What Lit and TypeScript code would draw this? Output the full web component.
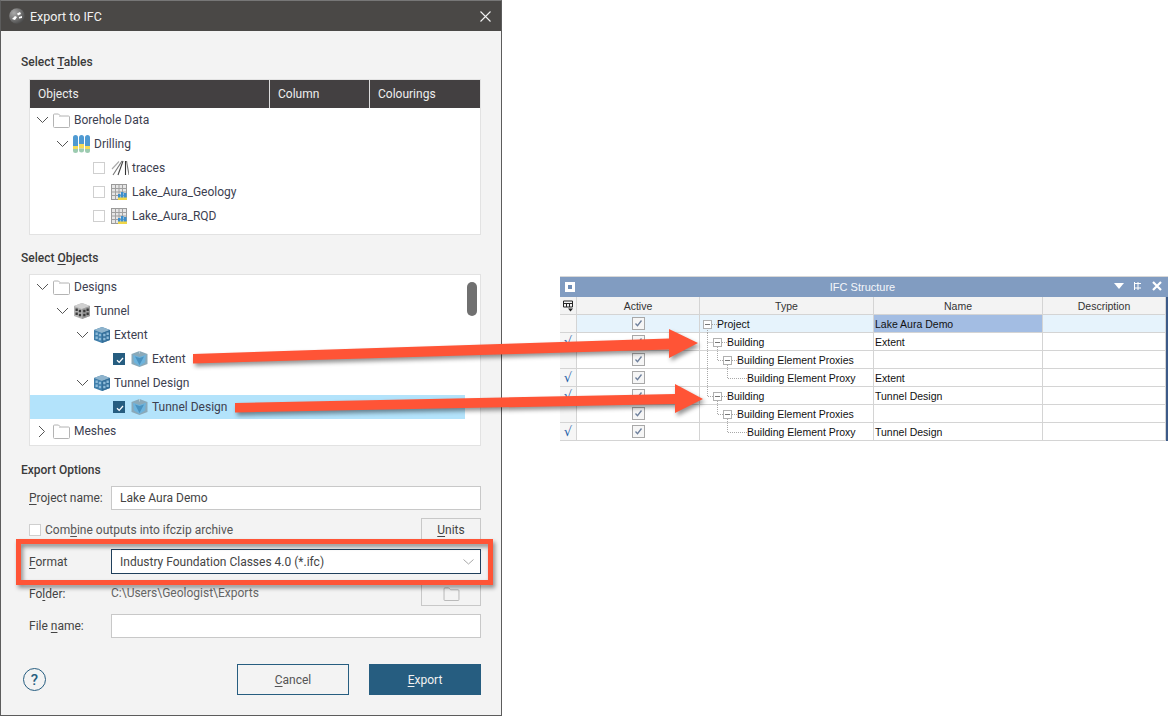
import { LitElement, html, css, svg } from "lit";
import { customElement } from "lit/decorators.js";

const chevDown = html`<svg class="chev" viewBox="0 0 13 8" width="13" height="8"><path d="M1 1l5.500 5.500L12 1" fill="none" stroke="#555" stroke-width="1"/></svg>`;
const chevRight = html`<svg class="chevr" viewBox="0 0 8 13" width="8" height="13"><path d="M1 1l5.500 5.500L1 12" fill="none" stroke="#555" stroke-width="1"/></svg>`;
const folder = html`<svg class="fold" viewBox="0 0 17 15" width="17" height="15"><path d="M.5 2a1 1 0 0 1 1-1h4l2 2h8a1 1 0 0 1 1 1v9.500a1 1 0 0 1-1 1h-14a1 1 0 0 1-1-1z" fill="#fff" stroke="#b4b4b4"/><path d="M6 3.500h10" stroke="#d8d8d8"/></svg>`;
const drilling = html`<svg class="fold" viewBox="0 0 18 18" width="18" height="18">
  ${[0, 6, 12].map((x, i) => svg`<g>
    <path d="M${x} 2.500a2.500 2.500 0 0 1 5 0V${i === 1 ? 9 : 11}h-5z" fill="#4f9ad2"/>
    <rect x="${x}" y="${i === 1 ? 9 : 11}" width="5" height="${i === 1 ? 4.500 : 3}" fill="#f4dc5a"/>
    <path d="M${x} ${i === 1 ? 13.500 : 14}h5v1.500a2.500 2.500 0 0 1-5 0z" fill="#9ccbb0"/></g>`)}
</svg>`;
const traces = html`<svg viewBox="0 0 18 16" width="18" height="16"><g fill="none" stroke-width="1.100">
  <path d="M11 1L2 15" stroke="#777"/><path d="M12 1L7 15" stroke="#444"/><path d="M14.500 1V15" stroke="#333"/><path d="M15.500 1L18 15" stroke="#777"/><path d="M8 1.500L1 9" stroke="#aaa"/></g></svg>`;
const tableIcon = html`<svg viewBox="0 0 17 16" width="17" height="16">
  <rect x=".5" y=".5" width="15" height="15" fill="#e6e6e6" stroke="#9a9a9a"/>
  <path d="M.5 4.500h15M.5 8h15M.5 11.500h15M4.500 .5v15M8 .5v15M11.500 .5v15" stroke="#a0a0a0"/>
  <rect x="7" y="10" width="2.500" height="4" fill="#3c8fce"/><rect x="10" y="8" width="2.500" height="6" fill="#3c8fce"/><rect x="13" y="9" width="2.500" height="5" fill="#3c8fce"/>
  <rect x="7" y="13.500" width="9" height="2.500" fill="#f0d648"/></svg>`;
const cube = (a: string, b: string, c: string, w: string) => html`<svg viewBox="0 0 16 16" width="16" height="16">
  <path d="M8 0l8 3v10l-8 3-8-3V3z" fill="${a}"/><path d="M8 0l8 3-8 3-8-3z" fill="${c}"/><path d="M8 6l8-3v10l-8 3z" fill="${b}"/>
  ${[[1.500, 5.500], [4.800, 6.800], [1.500, 9.500], [4.800, 10.800], [9.200, 6.800], [12.500, 5.500], [9.200, 10.800], [12.500, 9.500]].map(([x, y]) => svg`<rect x="${x}" y="${y}" width="2.300" height="2.500" fill="${w}"/>`)}
</svg>`;
const greyCube = cube("#b2b2b2", "#9c9c9c", "#d0d0d0", "#3a3a3a");
const blueCube = cube("#3f7eaa", "#356f99", "#8fb4cd", "#8ebbd9");
const surface = html`<svg viewBox="0 0 17 16" width="17" height="16">
  <path d="M8.500 0l8 3v10l-8 3-8-3V3z" fill="#8aa9b9"/><path d="M2 3.800l6.500 2.200 6.500-2.200-1 7.700-5.500 3.500-5.500-3.500z" fill="#6db3dc"/>
  <path d="M4 5.500l4.500 1.500 4.500-1.500-4.500 8.500z" fill="#4a92c0"/><path d="M8.500 0v2.500" stroke="#b9cbd5"/></svg>`;

type Row = { level: number; open?: boolean; closed?: boolean; check?: "off" | "on"; icon: unknown; label: string; sel?: boolean };
const tablesTree: Row[] = [
  { level: 0, open: true, icon: folder, label: "Borehole Data" },
  { level: 1, open: true, icon: drilling, label: "Drilling" },
  { level: 2, check: "off", icon: traces, label: "traces" },
  { level: 2, check: "off", icon: tableIcon, label: "Lake_Aura_Geology" },
  { level: 2, check: "off", icon: tableIcon, label: "Lake_Aura_RQD" },
];
const objectsTree: Row[] = [
  { level: 0, open: true, icon: folder, label: "Designs" },
  { level: 1, open: true, icon: greyCube, label: "Tunnel" },
  { level: 2, open: true, icon: blueCube, label: "Extent" },
  { level: 3, check: "on", icon: surface, label: "Extent" },
  { level: 2, open: true, icon: blueCube, label: "Tunnel Design" },
  { level: 3, check: "on", icon: surface, label: "Tunnel Design", sel: true },
  { level: 0, closed: true, icon: folder, label: "Meshes" },
];

type TRow = { tick: boolean; depth: number; type: string; name: string; first?: boolean; lines: string };
const grid: TRow[] = [
  { tick: false, depth: 0, type: "Project", name: "Lake Aura Demo", first: true, lines: "M7.500 13V18M12 9.500H17" },
  { tick: true, depth: 1, type: "Building", name: "Extent", lines: "M7.500 0V18M7.500 9.500H13M22 9.500H27M17.500 14V18" },
  { tick: false, depth: 2, type: "Building Element Proxies", name: "", lines: "M7.500 0V18M17.500 0V9.500H23M32 9.500H37M27.500 14V18" },
  { tick: true, depth: 3, type: "Building Element Proxy", name: "Extent", lines: "M7.500 0V18M27.500 0V9.500H47" },
  { tick: true, depth: 1, type: "Building", name: "Tunnel Design", lines: "M7.500 0V9.500H13M22 9.500H27M17.500 14V18" },
  { tick: false, depth: 2, type: "Building Element Proxies", name: "", lines: "M17.500 0V9.500H23M32 9.500H37M27.500 14V18" },
  { tick: true, depth: 3, type: "Building Element Proxy", name: "Tunnel Design", lines: "M27.500 0V9.500H47" },
];

@customElement("app-root")
export class AppRoot extends LitElement {
  static styles = css`
    :host { display: block; width: 1169px; height: 716px; position: relative; background: #fff; overflow: hidden;
      font-family: Roboto, "Liberation Sans", sans-serif; font-size: 12px; color: #3c3c3c; }
    .page { display: flex; align-items: flex-start; height: 716px; }
    u { text-underline-offset: 2px; text-decoration-thickness: 1px; }

    .dialog { box-sizing: border-box; width: 502px; height: 716px; flex: none; background: #f3f3f3;
      border: 1px solid #5c5c5c; border-top-color: #777; display: flex; flex-direction: column; }
    .titlebar { height: 30px; flex: none; background: #4a4846; color: #f2f2f2; display: flex; align-items: center;
      padding: 0 10px 0 8px; gap: 5px; font-size: 12.500px; }
    .titlebar span { flex: 1; }
    .heading { height: 16px; line-height: 16px; margin-left: 20px; font-weight: 500; color: #3a3a3a; }
    .h1 { margin-top: 23px; } .h2 { margin-top: 15px; } .h3 { margin-top: 16px; }

    .panel { box-sizing: border-box; width: 452px; margin-left: 28px; background: #fff; border: 1px solid #e2e2e2; flex: none; }
    .tables { height: 156px; margin-top: 9px; }
    .objects { height: 172px; margin-top: 8px; display: flex; }
    .thead { display: grid; grid-template-columns: 240px 100px 1fr; height: 28px; background: #434041; color: #eee; }
    .thead div { display: flex; align-items: center; padding-left: 8px; border-right: 1px solid #ddd; }
    .thead div:last-child { border-right: 0; }
    .tree { flex: 1; min-width: 0; }
    .row { height: 24px; display: flex; align-items: center; box-sizing: border-box; color: #3c4050; }
    .row.sel { background: #b3e3fb; }
    .slot { width: 18px; flex: none; display: flex; align-items: center; }
    .slot.leaf { width: 17px; }
    .chevr { margin-left: 2px; }
    .cb { box-sizing: border-box; width: 12px; height: 12px; background: #fff; border: 1px solid #cfcfcf; flex: none; display: block; }
    .cb.on { background: #265d80; border-color: #265d80; }
    .cb svg { display: block; }
    .cslot { width: 18px; flex: none; }
    .ic { width: 20px; flex: none; display: flex; align-items: center; }
    .ic.wide { width: 21px; }
    .fold { margin-left: -1px; }
    .gutter { width: 15px; flex: none; position: relative; }
    .thumb { width: 10px; height: 34px; margin: 7px 0 0 2px; border-radius: 5px; background: #707070; }

    .form { display: flex; align-items: center; margin-left: 28px; width: 452px; flex: none; }
    .form label { width: 82px; flex: none; color: #444; }
    .input { box-sizing: border-box; flex: 1; height: 24px; background: #fff; border: 1px solid #c8c8c8; padding-left: 8px; display: flex; align-items: center; color: #444; }
    .r1 { margin-top: 8px; height: 24px; } .r2 { margin-top: 8px; height: 24px; } .r3 { margin-top: 7px; height: 25px; }
    .r4 { margin-top: 8px; height: 24px; } .r5 { margin-top: 8px; height: 24px; }
    .combine { flex: 1; display: flex; align-items: center; gap: 4px; color: #555; }
    .small-btn { box-sizing: border-box; width: 60px; height: 24px; border: 1px solid #c8c8c8; background: #f3f3f3; display: flex; align-items: center; justify-content: center; color: #444; flex: none; }
    .combo { box-sizing: border-box; flex: 1; height: 25px; background: #fff; border: 1px solid #20405c; padding: 0 3px 0 8px; display: flex; align-items: center; justify-content: space-between; color: #444; }
    .path { flex: 1; color: #666; margin-top: -2px; }

    .footer { display: flex; align-items: center; margin: 26px 20px 0 22px; height: 31px; flex: none; }
    .help { box-sizing: border-box; width: 23px; height: 23px; border-radius: 50%; border: 1.500px solid #265d80; color: #265d80; font-size: 15px; font-weight: 500; display: flex; align-items: center; justify-content: center; margin-right: auto; }
    .btn { box-sizing: border-box; width: 112px; height: 31px; display: flex; align-items: center; justify-content: center; border: 1px solid #265d80; color: #555; }
    .btn.primary { background: #265d80; color: #f2f2f2; margin-left: 20px; }

    .ifc { box-sizing: border-box; width: 608px; margin: 276px 0 0 58px; flex: none; border-top: 1px solid #d8d8d8;
      font-family: "Liberation Sans", Arial, sans-serif; font-size: 10.500px; color: #111; }
    .ifc-title { height: 20px; background: #819cc1; position: relative; display: flex; align-items: center; justify-content: center; color: #f4f6fa; font-size: 11px; }
    .ifc-title span { margin-left: -3px; }
    .ifc-square { position: absolute; left: 5px; top: 5px; width: 10px; height: 10px; background: #fff; display: flex; align-items: center; justify-content: center; }
    .ifc-square i { display: block; width: 4px; height: 4px; background: #6f8db6; }
    .ifc-tools { position: absolute; right: 6px; top: 4px; display: flex; gap: 9px; align-items: center; }
    .ifc-grid { display: grid; grid-template-columns: 17px 123px 174px 169px 123px; border-right: 2px solid #3c5a88; background: #fff; }
    .c { box-sizing: border-box; height: 18px; border-right: 1px solid #d4d4d4; border-bottom: 1px solid #d4d4d4; display: flex; align-items: center; position: relative; }
    .hd { background: #f3f3f3; justify-content: center; color: #333; }
    .c.num { justify-content: center; background: #f6f6f6; color: #1e5fa8; font-family: "DejaVu Sans", sans-serif; font-size: 13px; }
    .c.mid { justify-content: center; }
    .c.cur { background: #e6f3fc; }
    .c.nm { padding-left: 1px; }
    .c.nmsel { background: #a3bde3; }
    .cbx { box-sizing: border-box; width: 13px; height: 13px; border: 1px solid #a8a8a8; background: #f6f6f6; display: block; }
    .cbx svg { display: block; }
    .lines { position: absolute; left: 0; top: 0; }
    .tbox { position: absolute; box-sizing: border-box; top: 5px; width: 9px; height: 9px; background: #fff; border: 1px solid #b0b0b0; display: flex; align-items: center; justify-content: center; }
    .tbox i { display: block; width: 5px; height: 1px; background: #777; }
    .ttext { position: absolute; top: 2px; white-space: nowrap; line-height: 14px; background: #fff; }
    .cur .ttext { background: transparent; }
    .overlay { position: absolute; left: 0; top: 0; pointer-events: none; }
    .shadow { filter: drop-shadow(2px 3px 2px rgba(0,0,0,.42)); }
  `;

  private treeRows(rows: Row[]) {
    return rows.map((r) => {
      const pad = 6 + 20 * r.level;
      return html`<div class="row ${r.sel ? "sel" : ""}" style="padding-left:${pad}px">
        ${r.check
          ? html`<div class="slot leaf"></div><div class="cslot"><span class="cb ${r.check === "on" ? "on" : ""}">${r.check === "on"
              ? html`<svg viewBox="0 0 12 12" width="12" height="12"><path d="M3 6.200l2.200 2.200L9 4" fill="none" stroke="#fff" stroke-width="1.300"/></svg>`
              : ""}</span></div>`
          : html`<div class="slot">${r.open ? chevDown : r.closed ? chevRight : ""}</div>`}
        <div class="ic ${r.check ? "wide" : ""}">${r.icon}</div>
        <span>${r.label}</span>
      </div>`;
    });
  }

  private gridRows() {
    const chk = html`<span class="cbx"><svg viewBox="0 0 11 11" width="11" height="11"><path d="M2.500 5.500l2 2.200L8.500 2.500" fill="none" stroke="#6d7f9c" stroke-width="1.300"/></svg></span>`;
    return grid.map((g) => html`
      <div class="c num">${g.tick ? "√" : ""}</div>
      <div class="c mid ${g.first ? "cur" : ""}">${chk}</div>
      <div class="c ${g.first ? "cur" : ""}">
        <svg class="lines" width="174" height="18"><path d="${g.lines}" fill="none" stroke="#a8a8a8" stroke-dasharray="1 1"/></svg>
        ${g.depth < 3 ? html`<span class="tbox" style="left:${3 + g.depth * 10}px"><i></i></span>` : ""}
        <span class="ttext" style="left:${17 + g.depth * 10}px">${g.type}</span>
      </div>
      <div class="c nm ${g.first ? "nmsel" : ""}">${g.name}</div>
      <div class="c ${g.first ? "cur" : ""}"></div>
    `);
  }

  render() {
    return html`
      <div class="page">
        <div class="dialog">
          <div class="titlebar">
            <svg viewBox="0 0 16 16" width="16" height="16">
              <defs><radialGradient id="tg" cx=".3" cy=".3" r=".9"><stop offset="0" stop-color="#aaa"/><stop offset="1" stop-color="#3a3a3a"/></radialGradient></defs>
              <circle cx="8" cy="8" r="7.800" fill="url(#tg)"/>
              <path d="M3 11l3-3 2 1-2 3zM8 5.500l3-1.500 1 2-3 1.500zM10 9l3-1v2l-3 .5z" fill="#fff"/>
            </svg>
            <span>Export to IFC</span>
            <svg viewBox="0 0 11 11" width="11" height="11"><path d="M.5 .5l10 10M10.500 .5l-10 10" stroke="#f2f2f2" stroke-width="1.100"/></svg>
          </div>

          <div class="heading h1">Select <u>T</u>ables</div>
          <div class="panel tables">
            <div class="thead"><div>Objects</div><div>Column</div><div>Colourings</div></div>
            <div class="tree">${this.treeRows(tablesTree)}</div>
          </div>

          <div class="heading h2">Select <u>O</u>bjects</div>
          <div class="panel objects">
            <div class="tree">${this.treeRows(objectsTree)}</div>
            <div class="gutter"><div class="thumb"></div></div>
          </div>

          <div class="heading h3">Export Options</div>
          <div class="form r1"><label><u>P</u>roject name:</label><div class="input">Lake Aura Demo</div></div>
          <div class="form r2">
            <div class="combine"><span class="cb"></span><span>Com<u>b</u>ine outputs into ifczip archive</span></div>
            <div class="small-btn"><span><u>U</u>nits</span></div>
          </div>
          <div class="form r3"><label><u>F</u>ormat</label>
            <div class="combo"><span>Industry Foundation Classes 4.0 (*.ifc)</span>
              <svg viewBox="0 0 11 6" width="11" height="6" style="margin-right:3px"><path d="M.5 .5l5 4.500 5-4.500" fill="none" stroke="#a8a8a8"/></svg>
            </div>
          </div>
          <div class="form r4"><label>Fo<u>l</u>der:</label><div class="path">C:\\Users\\Geologist\\Exports</div>
            <div class="small-btn"><svg viewBox="0 0 17 15" width="17" height="14"><path d="M.5 2a1 1 0 0 1 1-1h4l2 2h8a1 1 0 0 1 1 1v9.500a1 1 0 0 1-1 1h-14a1 1 0 0 1-1-1z" fill="none" stroke="#b4b4b4"/></svg></div>
          </div>
          <div class="form r5"><label>File <u>n</u>ame:</label><div class="input"></div></div>

          <div class="footer">
            <div class="help">?</div>
            <div class="btn"><span><u>C</u>ancel</span></div>
            <div class="btn primary"><span><u>E</u>xport</span></div>
          </div>
        </div>

        <div class="ifc">
          <div class="ifc-title">
            <div class="ifc-square"><i></i></div>
            <span>IFC Structure</span>
            <div class="ifc-tools">
              <svg viewBox="0 0 10 6" width="10" height="6"><path d="M0 0h10L5 6z" fill="#fff"/></svg>
              <svg viewBox="0 0 10 10" width="10" height="10"><path d="M1.500 1v8M1.500 2.500H8M1.500 7H8M5 1v8" stroke="#fff" stroke-width="1" fill="none"/></svg>
              <svg viewBox="0 0 10 10" width="10" height="10"><path d="M1 1l8 8M9 1L1 9" stroke="#fff" stroke-width="2.200"/></svg>
            </div>
          </div>
          <div class="ifc-grid">
            <div class="c hd"><svg viewBox="0 0 11 12" width="11" height="12"><path d="M.5 1h9v6h-9zM.5 3.500h9M3.500 3.500V7M6.500 3.500V7" fill="none" stroke="#222"/><path d="M5 8.500h5l-2.500 3z" fill="#222"/></svg></div>
            <div class="c hd">Active</div><div class="c hd">Type</div><div class="c hd">Name</div><div class="c hd">Description</div>
            ${this.gridRows()}
          </div>
        </div>
      </div>

      <svg class="overlay" width="1169" height="716" viewBox="0 0 1169 716">
        <g class="shadow" fill="#ff5436">
          <path d="M18.500 541.500h472v41h-472z" fill="none" stroke="#ff5436" stroke-width="5"/>
          <path d="M193 354L669 338.500V329L698 343L669 358V349.500L193 363.500z"/>
          <path d="M235 403L675 394V384L703 399L675 413V404L235 412.500z"/>
        </g>
      </svg>
    `;
  }
}
